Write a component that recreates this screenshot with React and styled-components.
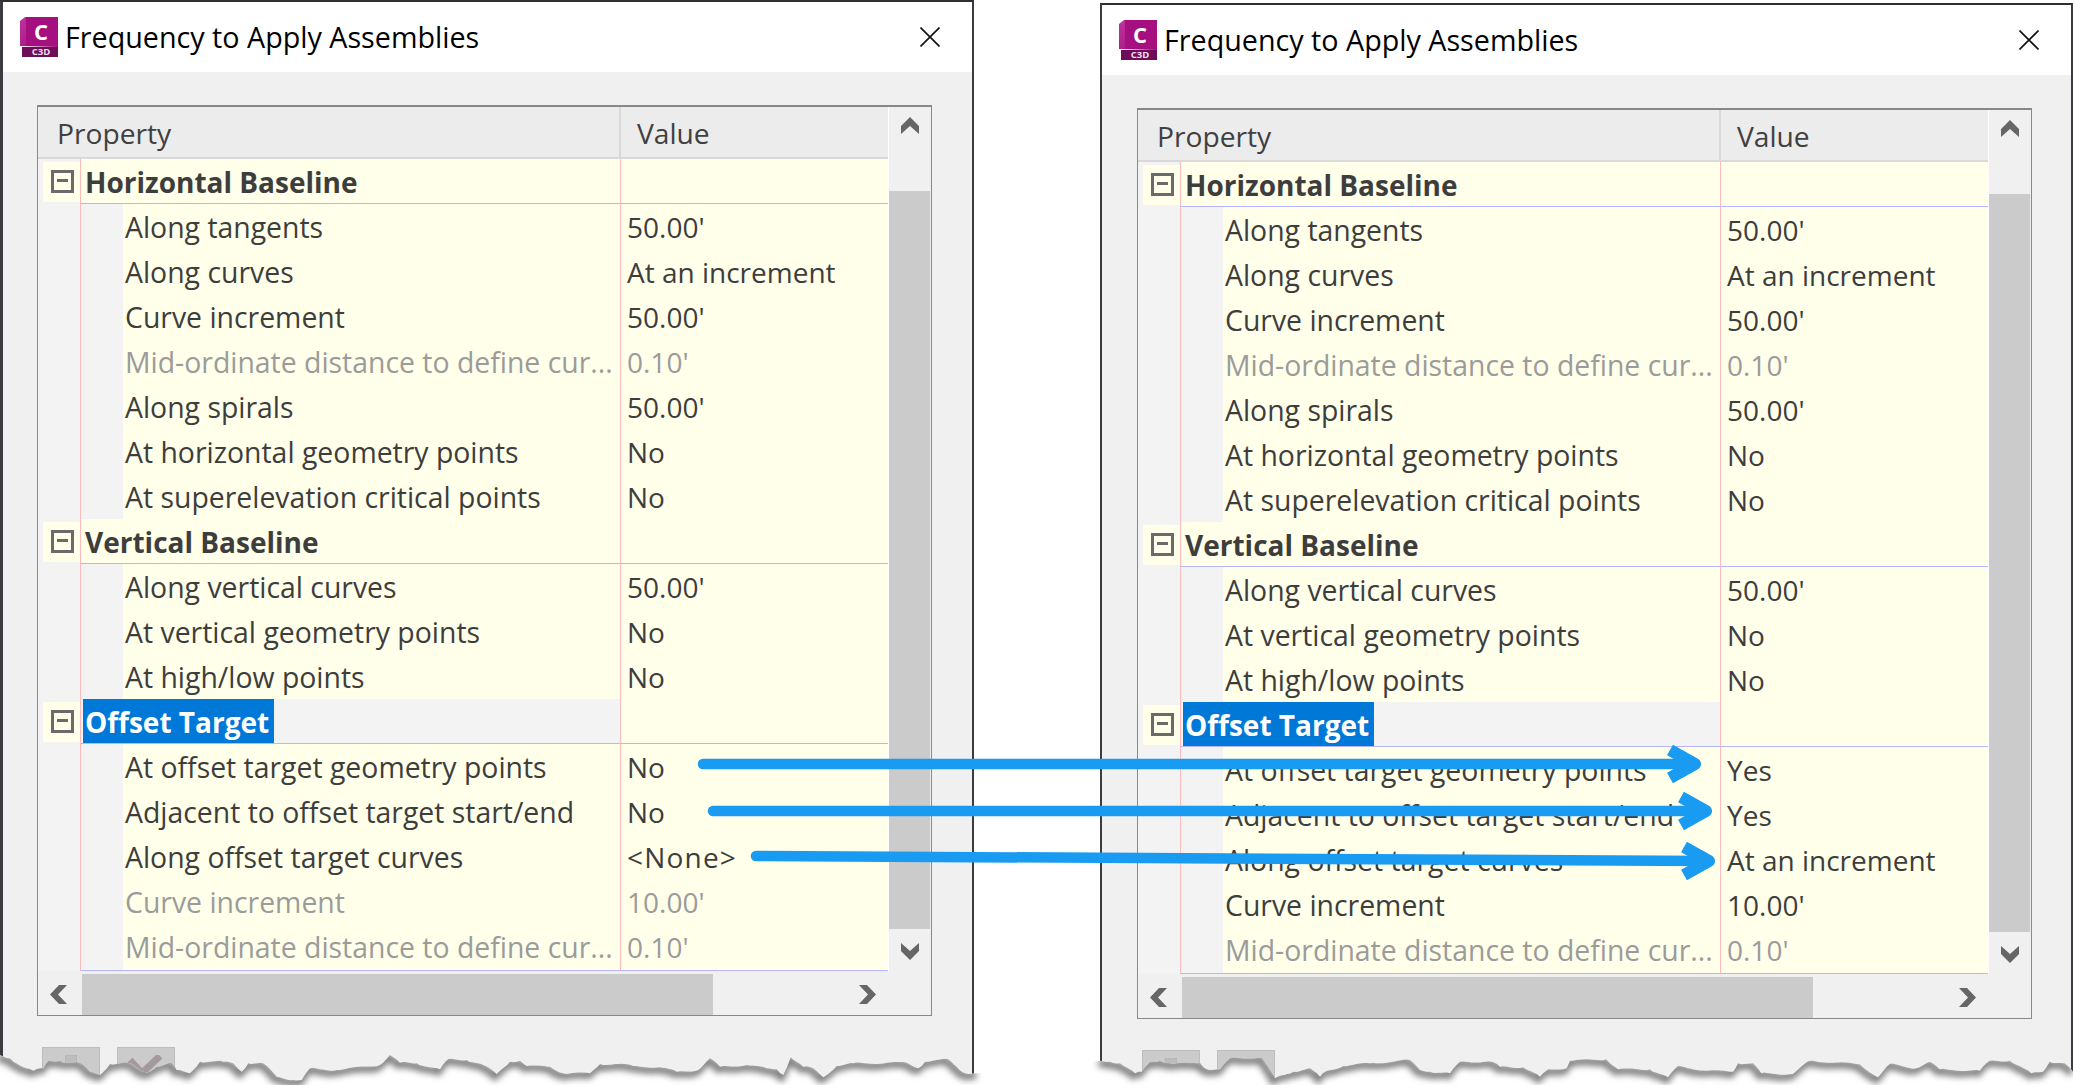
import React from 'react';
import styled, { createGlobalStyle } from 'styled-components';

const Global = createGlobalStyle`
  html, body { margin: 0; padding: 0; background: #fff; }
  body { font-family: "Open Sans", "Noto Sans", sans-serif; }
`;

const Page = styled.div`
  position: relative;
  display: flex;
  width: 2073px;
  height: 1085px;
  overflow: hidden;
  background: #fff;
`;

const Window = styled.section`
  flex: none;
  box-sizing: border-box;
  width: ${p => p.$width}px;
  height: ${p => 1085 - p.$top}px;
  margin-top: ${p => p.$top}px;
  margin-left: ${p => p.$left}px;
  background: #f0f0f0;
  border-top: 2px solid #2f2f33;
  border-left: ${p => p.$edge}px solid #3b3b40;
  border-right: 2px solid #3b3b40;
`;

const TitleBar = styled.header`
  box-sizing: border-box;
  display: flex;
  align-items: center;
  height: 70px;
  padding: 0 32px 0 17px;
  background: #fff;
  color: #000;
  font-size: 28.7px;
`;

const TitleText = styled.span`
  margin: 0 0 1px 7px;
  flex: 1;
`;

const Logo = styled.svg`
  width: 38px;
  height: 40px;
  flex: none;
`;

const Close = styled.svg`
  width: 20px;
  height: 20px;
  flex: none;
`;

const Panel = styled.div`
  box-sizing: border-box;
  width: 895px;
  height: 911px;
  margin: 33px 0 0 ${p => p.$inset}px;
  border: 1px solid #888;
  border-top-width: 2px;
  display: grid;
  grid-template-columns: 851px 1fr;
  grid-template-rows: 864px 1fr;
`;

const TableArea = styled.div`
  border-right: 1px solid #fff;
  background: #f3f3f3;
`;

const HeaderRow = styled.div`
  display: grid;
  grid-template-columns: 583px 1fr;
  height: 50px;
  background: #ececec;
  border-bottom: 2px solid #d9d9d9;
  color: #404040;
  font-size: 28.2px;
  line-height: 53px;
`;

const HeaderCell = styled.div`
  padding-left: ${p => p.$pad}px;
  border-right: ${p => (p.$divider ? '2px solid #d9d9d9' : '0')};
`;

const Row = styled.div`
  display: grid;
  grid-template-columns: 42px 540px 1fr;
  height: 45px;
  box-sizing: border-box;
  font-size: 28.4px;
  line-height: 46px;
  color: ${p => (p.$muted ? '#9b9b9b' : '#3d3d3d')};
  white-space: nowrap;
`;

const Gutter = styled.div`
  display: flex;
  align-items: center;
  padding-left: 5px;
  background: #f3f3f3;
`;

const Toggle = styled.div`
  box-sizing: border-box;
  display: flex;
  align-items: center;
  width: 37px;
  height: 40px;
  padding-left: 8px;
  background: #ffffea;
`;

const MinusBox = styled.div`
  position: relative;
  box-sizing: border-box;
  width: 23px;
  height: 23px;
  border: 3px solid #6a6a6a;
  &::after {
    content: '';
    position: absolute;
    left: 3px;
    right: 3px;
    top: 6px;
    height: 3px;
    background: #6a6a6a;
  }
`;

const NameCell = styled.div`
  box-sizing: border-box;
  border-left: 1px solid #ffbcbc;
  border-bottom: 1px solid #b6b6ff;
  display: flex;
  background: ${p => (p.$plain ? '#f3f3f3' : '#ffffea')};
`;

const Indent = styled.div`
  flex: none;
  width: 42px;
  background: #f3f3f3;
`;

const Name = styled.span`
  padding-left: 2px;
  overflow: hidden;
`;

const GroupName = styled.span`
  height: 44px;
  padding: 0 5px 0 2px;
  margin-left: 2px;
  font-weight: 700;
  font-size: 28px;
  color: ${p => (p.$selected ? '#fff' : '#3d3d3d')};
  background: ${p => (p.$selected ? '#0078d7' : 'transparent')};
`;

const ValueCell = styled.div`
  box-sizing: border-box;
  padding-left: 6px;
  border-left: 1px solid #ffbcbc;
  border-bottom: 1px solid #b6b6ff;
  background: #ffffea;
  font-size: 28px;
  letter-spacing: ${p => (p.$wide ? '1.2px' : '0')};
`;

const VScroll = styled.div`
  display: flex;
  flex-direction: column;
  align-items: center;
  padding-right: 1px;
`;

const VThumb = styled.div`
  align-self: stretch;
  height: 738px;
  margin: 57px 0 14px;
  background: #cbcbcb;
`;

const HScroll = styled.div`
  grid-column: 1 / 3;
  display: flex;
  align-items: center;
  height: 41px;
  margin-top: 3px;
`;

const HThumb = styled.div`
  flex: none;
  width: 631px;
  height: 41px;
  margin: 0 146px 0 15px;
  background: #cbcbcb;
`;

const Chevron = styled.svg`
  flex: none;
  display: block;
  margin: ${p => p.$margin || '0'};
`;

const Footer = styled.div`
  display: flex;
  gap: 17px;
  margin: 31px 0 0 ${p => p.$inset}px;
`;

const FootButton = styled.div`
  display: flex;
  justify-content: center;
  box-sizing: border-box;
  width: 58px;
  height: 40px;
  padding-top: 7px;
  background: #cbcbcb;
  border: 1px solid #bdbdbd;
`;

const Overlay = styled.svg`
  position: absolute;
  left: 0;
  top: 0;
  width: 2073px;
  height: 1085px;
  pointer-events: none;
`;

const data = (yes) => [
  { g: 'Horizontal Baseline' },
  { n: 'Along tangents', v: "50.00'" },
  { n: 'Along curves', v: 'At an increment' },
  { n: 'Curve increment', v: "50.00'" },
  { n: 'Mid-ordinate distance to define cur...', v: "0.10'", m: 1 },
  { n: 'Along spirals', v: "50.00'" },
  { n: 'At horizontal geometry points', v: 'No' },
  { n: 'At superelevation critical points', v: 'No' },
  { g: 'Vertical Baseline' },
  { n: 'Along vertical curves', v: "50.00'" },
  { n: 'At vertical geometry points', v: 'No' },
  { n: 'At high/low points', v: 'No' },
  { g: 'Offset Target', s: 1 },
  { n: 'At offset target geometry points', v: yes ? 'Yes' : 'No' },
  { n: 'Adjacent to offset target start/end', v: yes ? 'Yes' : 'No' },
  { n: 'Along offset target curves', v: yes ? 'At an increment' : '<None>', w: !yes },
  { n: 'Curve increment', v: "10.00'", m: yes ? 0 : 1 },
  { n: 'Mid-ordinate distance to define cur...', v: "0.10'", m: 1 },
];

const CHEV = {
  up: { w: 18, h: 17, p: '0,9 9,0 18,9 18,17 9,9 0,17' },
  down: { w: 18, h: 17, p: '0,0 9,8 18,0 18,8 9,17 0,8' },
  left: { w: 17, h: 19, p: '9,0 17,0 8,9.5 17,19 9,19 0,9.5' },
  right: { w: 17, h: 19, p: '0,0 8,0 17,9.5 8,19 0,19 9,9.5' },
};

function Chev({ dir, margin }) {
  const c = CHEV[dir];
  return (
    <Chevron $margin={margin} width={c.w} height={c.h} viewBox={`0 0 ${c.w} ${c.h}`}>
      <polygon points={c.p} fill="#666" />
    </Chevron>
  );
}

function AppLogo({ id }) {
  return (
    <Logo viewBox="0 0 38 40">
      <defs>
        <linearGradient id={id} x1="0" x2="1" y1="0" y2="1">
          <stop offset="0" stopColor="#c0329f" />
          <stop offset="1" stopColor="#9c0d78" />
        </linearGradient>
      </defs>
      <path d="M2 30 L2 40 L38 40 L38 30 Z" fill="#6e0d58" />
      <path d="M0 4 L5 0 L35 0 L38 4 L38 30 L0 29 Z" fill={`url(#${id})`} />
      <rect x="6" y="0" width="32" height="29" fill="#a60f80" />
      <text x="21" y="23" textAnchor="middle" fill="#fff" fontFamily="Open Sans" fontWeight="700" fontSize="22">C</text>
      <text x="21" y="38" textAnchor="middle" fill="#f4dcec" fontFamily="Open Sans" fontWeight="700" fontSize="9.5">C3D</text>
    </Logo>
  );
}

function Dialog({ id, width, top, left, edge, yes, showCheck }) {
  const inset = 37 - edge;
  return (
    <Window $width={width} $top={top} $left={left} $edge={edge}>
      <TitleBar>
        <AppLogo id={id} />
        <TitleText>Frequency to Apply Assemblies</TitleText>
        <Close viewBox="0 0 20 20">
          <path d="M0.5 0.5 L19.5 19.5 M19.5 0.5 L0.5 19.5" stroke="#111" strokeWidth="1.6" fill="none" />
        </Close>
      </TitleBar>
      <Panel $inset={inset}>
        <TableArea>
          <HeaderRow>
            <HeaderCell $pad={19} $divider>Property</HeaderCell>
            <HeaderCell $pad={16}>Value</HeaderCell>
          </HeaderRow>
          {data(yes).map((r, i) =>
            r.g ? (
              <Row key={i}>
                <Gutter>
                  <Toggle><MinusBox /></Toggle>
                </Gutter>
                <NameCell $plain={r.s}>
                  <GroupName $selected={r.s}>{r.g}</GroupName>
                </NameCell>
                <ValueCell />
              </Row>
            ) : (
              <Row key={i} $muted={r.m}>
                <Gutter />
                <NameCell>
                  <Indent />
                  <Name>{r.n}</Name>
                </NameCell>
                <ValueCell $wide={r.w}>{r.v}</ValueCell>
              </Row>
            )
          )}
        </TableArea>
        <VScroll>
          <Chev dir="up" margin="10px 0 0" />
          <VThumb />
          <Chev dir="down" />
        </VScroll>
        <HScroll>
          <Chev dir="left" margin="0 0 0 12px" />
          <HThumb />
          <Chev dir="right" />
        </HScroll>
      </Panel>
      <Footer $inset={inset + 5}>
        <FootButton>
          <svg width="12" height="9"><rect width="12" height="9" fill="#bdbdbd" stroke="#aaa" strokeDasharray="2 1" /></svg>
        </FootButton>
        <FootButton>
          {showCheck && (
            <svg width="38" height="26" viewBox="0 0 38 26">
              <path d="M3 5 L15 18 L33 1" stroke="#a49a9e" strokeWidth="7" fill="none" />
            </svg>
          )}
        </FootButton>
      </Footer>
    </Window>
  );
}

/* torn-paper edge traced from the picture: [x, y] in zoom units */
const conv = (pts, ox) => pts.map(([x, y]) => [ox + x / 3, 1030 + y / 3]);
const edgeA = [
  ...conv([[0,75],[30,85],[70,112],[100,122],[130,115],[145,92],[180,92],[200,98],[240,98],[270,125],[300,135],[330,102],[385,98],[420,120],[440,128],[470,110],[515,98],[530,120],[570,130],[600,95],[670,95],[700,100],[725,125],[745,100],[790,100],[830,140],[880,150],[905,150],[930,115],[960,118],[1010,120],[1140,105],[1170,75],[1200,98],[1250,100],[1320,118],[1345,87],[1400,90],[1450,105],[1490,132],[1530,95]], 0),
  ...conv([[0,92],[20,108],[90,110],[130,130],[210,130],[240,102],[295,102],[340,108],[420,112],[470,125],[535,120],[570,85],[600,110],[680,105],[740,115],[770,118],[790,135],[812,82],[850,110],[880,115],[910,142],[950,108],[1000,100],[1160,98],[1195,115],[1215,95],[1285,88],[1310,110],[1335,130],[1375,130]], 520),
];
const edgeB = [
  ...conv([[32,92],[60,95],[90,100],[135,130],[155,125],[180,95],[210,92],[250,102],[330,98],[350,118],[390,118],[420,85],[515,82],[555,145],[610,125],[660,115],[690,140],[705,125],[760,108],[840,100],[960,90],[990,120],[1020,125],[1080,130],[1110,95],[1205,95],[1230,110],[1300,112],[1350,140],[1375,118],[1430,115],[1440,92]], 1090),
  ...conv([[0,92],[100,88],[135,118],[230,118],[285,142],[315,108],[400,122],[480,125],[495,100],[540,100],[565,130],[660,132],[710,92],[860,103],[915,142],[950,102],[1030,115],[1070,95],[1100,118],[1220,122],[1250,92],[1310,92],[1375,130],[1410,125],[1430,95],[1475,100],[1500,125]], 1573),
];

function roughen(pts) {
  const out = [];
  let k = 0;
  for (let i = 0; i < pts.length - 1; i++) {
    const [x0, y0] = pts[i];
    const [x1, y1] = pts[i + 1];
    const n = Math.max(1, Math.round((x1 - x0) / 3));
    for (let j = 0; j < n; j++) {
      const t = j / n;
      const jit = j === 0 ? 0 : Math.sin(k * 12.9898) * 0.9;
      k++;
      out.push([x0 + (x1 - x0) * t, y0 + (y1 - y0) * t + jit]);
    }
  }
  out.push(pts[pts.length - 1]);
  return out;
}

const str = (a) => a.map(([x, y]) => `${x.toFixed(1)},${y.toFixed(1)}`).join(' ');

function TornEdge() {
  const a = roughen(edgeA);
  const b = roughen(edgeB);
  const region = `${str(a)} ${str(b)} 2073,1085 0,1085`;
  return (
    <>
      <defs>
        <clipPath id="tornClip"><polygon points={region} /></clipPath>
        <filter id="tornBlur" x="-5%" y="-200%" width="110%" height="500%">
          <feGaussianBlur stdDeviation="3" />
        </filter>
      </defs>
      <polygon points={region} fill="#fff" />
      <g clipPath="url(#tornClip)">
        <g filter="url(#tornBlur)" transform="translate(-2 2)" fill="none" stroke="#7d7d7d" strokeWidth="8">
          <polyline points={str(a)} />
          <polyline points={str(b)} />
        </g>
      </g>
    </>
  );
}

function Arrow({ x0, y0, x1, y1 }) {
  return (
    <g fill="none" stroke="#1a9bf2" strokeLinecap="round" strokeLinejoin="round">
      <path d={`M${x0} ${y0} L${x1 - 8} ${y1}`} strokeWidth="10.5" />
      <path d={`M${x1 - 31} ${y1 - 14} L${x1 - 6} ${y1} L${x1 - 31} ${y1 + 14}`} strokeLinecap="butt" strokeWidth="12" />
    </g>
  );
}

export default function App() {
  return (
    <Page>
      <Global />
      <Dialog id="lgA" width={974} top={0} left={0} edge={3} showCheck />
      <Dialog id="lgB" width={973} top={3} left={126} edge={2} yes />
      <Overlay viewBox="0 0 2073 1085">
        <TornEdge />
        <Arrow x0={703} y0={764} x1={1701} y1={764} />
        <Arrow x0={713} y0={811} x1={1712} y1={811} />
        <Arrow x0={756} y0={856} x1={1715} y1={861} />
      </Overlay>
    </Page>
  );
}
